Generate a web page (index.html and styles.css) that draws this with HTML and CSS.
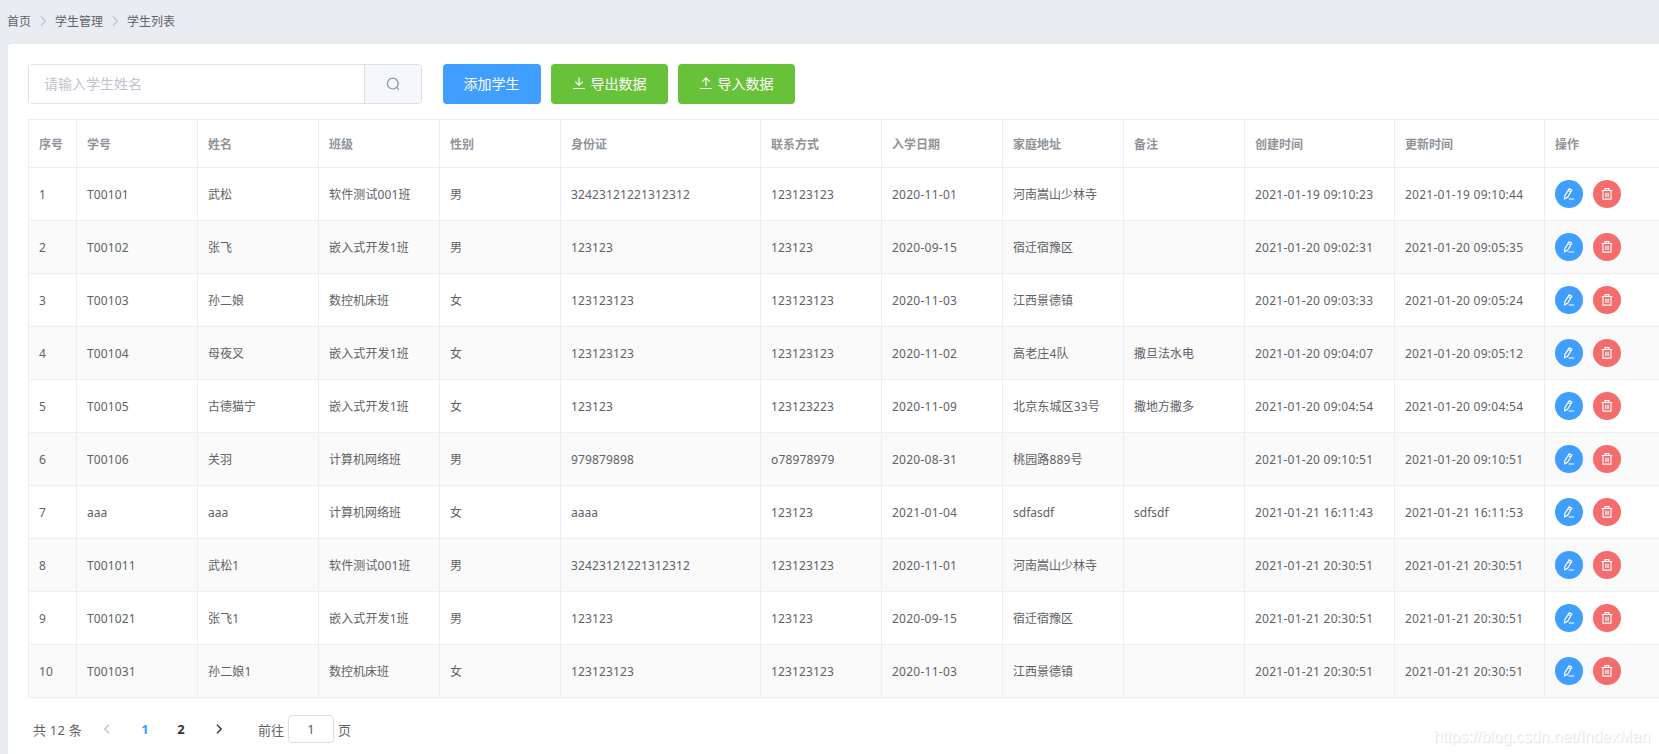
FILE: index.html
```html
<!DOCTYPE html>
<html lang="zh-CN">
<head>
    <meta charset="UTF-8">
    <meta name="viewport" content="width=device-width, initial-scale=1.0">
    <title>学生列表</title>
    <link rel="stylesheet" href="styles.css">
</head>
<body>
    <div class="breadcrumb">
        <span>首页</span>
        <svg class="separator" viewBox="0 0 12 12"><path d="M4 1.5 8.5 6 4 10.5"/></svg>
        <span>学生管理</span>
        <svg class="separator" viewBox="0 0 12 12"><path d="M4 1.5 8.5 6 4 10.5"/></svg>
        <span>学生列表</span>
    </div>

    <div class="card">
        <div class="toolbar">
            <div class="search">
                <input type="text" placeholder="请输入学生姓名">
                <button class="search-btn">
                    <svg class="icon" viewBox="0 0 14 14"><circle cx="6.8" cy="6.6" r="5.4"/><path d="M10.4 10.2 12.8 12.6"/></svg>
                </button>
            </div>
            <button class="btn primary">添加学生</button>
            <button class="btn success">
                <svg class="icon" viewBox="0 0 14 14"><path d="M7 1.5V9M3.2 5.6 7 9.2 10.8 5.6M1.2 12.5H12.8"/></svg>
                <span>导出数据</span>
            </button>
            <button class="btn success">
                <svg class="icon" viewBox="0 0 14 14"><path d="M7 10V2M3.2 5.6 7 1.9 10.8 5.6M1.2 12.5H12.8"/></svg>
                <span>导入数据</span>
            </button>
        </div>

        <table class="table">
            <colgroup>
                <col class="col-index">
                <col class="col"><col class="col"><col class="col"><col class="col">
                <col class="col-card">
                <col class="col"><col class="col"><col class="col"><col class="col">
                <col class="col-time"><col class="col-time"><col class="col-time">
            </colgroup>
            <thead>
                <tr>
                    <th>序号</th>
                    <th>学号</th>
                    <th>姓名</th>
                    <th>班级</th>
                    <th>性别</th>
                    <th>身份证</th>
                    <th>联系方式</th>
                    <th>入学日期</th>
                    <th>家庭地址</th>
                    <th>备注</th>
                    <th>创建时间</th>
                    <th>更新时间</th>
                    <th>操作</th>
                </tr>
            </thead>
            <tbody id="studentList"></tbody>
        </table>

        <div class="pagination">
            <span class="total">共 12 条</span>
            <button class="arrow disabled"><svg viewBox="0 0 12 12"><path d="M8 1.8 3.8 6 8 10.2"/></svg></button>
            <ul class="pager">
                <li class="active">1</li>
                <li>2</li>
            </ul>
            <button class="arrow"><svg viewBox="0 0 12 12"><path d="M4 1.8 8.2 6 4 10.2"/></svg></button>
            <span class="jump">前往<input type="text" value="1">页</span>
        </div>
    </div>

    <div class="watermark">https://blog.csdn.net/IndexMan</div>

    <script>
        const students = [
            ["T00101", "武松", "软件测试001班", "男", "32423121221312312", "123123123", "2020-11-01", "河南嵩山少林寺", "", "2021-01-19 09:10:23", "2021-01-19 09:10:44"],
            ["T00102", "张飞", "嵌入式开发1班", "男", "123123", "123123", "2020-09-15", "宿迁宿豫区", "", "2021-01-20 09:02:31", "2021-01-20 09:05:35"],
            ["T00103", "孙二娘", "数控机床班", "女", "123123123", "123123123", "2020-11-03", "江西景德镇", "", "2021-01-20 09:03:33", "2021-01-20 09:05:24"],
            ["T00104", "母夜叉", "嵌入式开发1班", "女", "123123123", "123123123", "2020-11-02", "高老庄4队", "撒旦法水电", "2021-01-20 09:04:07", "2021-01-20 09:05:12"],
            ["T00105", "古德猫宁", "嵌入式开发1班", "女", "123123", "123123223", "2020-11-09", "北京东城区33号", "撒地方撒多", "2021-01-20 09:04:54", "2021-01-20 09:04:54"],
            ["T00106", "关羽", "计算机网络班", "男", "979879898", "o78978979", "2020-08-31", "桃园路889号", "", "2021-01-20 09:10:51", "2021-01-20 09:10:51"],
            ["aaa", "aaa", "计算机网络班", "女", "aaaa", "123123", "2021-01-04", "sdfasdf", "sdfsdf", "2021-01-21 16:11:43", "2021-01-21 16:11:53"],
            ["T001011", "武松1", "软件测试001班", "男", "32423121221312312", "123123123", "2020-11-01", "河南嵩山少林寺", "", "2021-01-21 20:30:51", "2021-01-21 20:30:51"],
            ["T001021", "张飞1", "嵌入式开发1班", "男", "123123", "123123", "2020-09-15", "宿迁宿豫区", "", "2021-01-21 20:30:51", "2021-01-21 20:30:51"],
            ["T001031", "孙二娘1", "数控机床班", "女", "123123123", "123123123", "2020-11-03", "江西景德镇", "", "2021-01-21 20:30:51", "2021-01-21 20:30:51"]
        ];

        const actions = `
            <div class="actions">
                <button class="circle edit"><svg viewBox="0 0 12 12"><path d="M6.2 .8 8.8 2.2 4.6 9.2 1.6 10.8 1.8 7.6ZM5.2 2.6 7.8 4.1M5.6 11H11.2"/></svg></button>
                <button class="circle delete"><svg viewBox="0 0 12 12"><path d="M.6 2.5H11.4M4 2.5V.7H8V2.5M2 2.7V11.2H10V2.7M4.9 4.8V9M7.1 4.8V9"/></svg></button>
            </div>`;

        // date and time columns
        const dateColumns = [6, 9, 10];

        document.getElementById("studentList").innerHTML = students.map((row, i) => {
            const cells = row.map((text, n) => {
                let type = "";
                if (dateColumns.includes(n)) type = "date";
                else if (/\d/.test(text)) type = "code";
                return `<td class="${type}">${text}</td>`;
            }).join('');
            return `<tr><td class="code">${i + 1}</td>${cells}<td>${actions}</td></tr>`;
        }).join('');
    </script>
</body>
</html>
```
FILE: styles.css
```css
* {
    box-sizing: border-box;
}
body {
    margin: 0;
    height: 754px;
    overflow: hidden;
    background: #e9edf2;
    color: #606266;
    font-family: 'Noto Sans', 'Noto Sans CJK SC', sans-serif;
    font-size: 12px;
}
button, input {
    font-family: inherit;
    margin: 0;
    padding: 0;
    outline: none;
}
button {
    border: none;
    cursor: pointer;
}
svg {
    fill: none;
    stroke: currentColor;
}

/* Breadcrumb */
.breadcrumb {
    display: flex;
    align-items: center;
    height: 44px;
    padding: 0 0 2px 7px;
}
.separator {
    width: 12px;
    height: 12px;
    margin: 0 6px;
    color: #c0c4cc;
    stroke-width: 1.3;
}

/* Card */
.card {
    height: 720px;
    margin-left: 8px;
    padding: 20px 0 0 20px;
    background: white;
    border-radius: 4px 0 0 0;
    overflow: hidden;
}
.toolbar {
    display: flex;
    margin-bottom: 15px;
}
.search {
    display: flex;
    width: 394px;
    height: 40px;
    margin-right: 21px;
    border: 1px solid #dcdfe6;
    border-radius: 4px;
    overflow: hidden;
}
.search input {
    flex: 1;
    min-width: 0;
    padding: 0 15px 2px;
    border: none;
    font-size: 14px;
    color: #606266;
}
.search input::placeholder {
    color: #c0c4cc;
}
.search-btn {
    display: flex;
    align-items: center;
    justify-content: center;
    width: 57px;
    border-left: 1px solid #dcdfe6;
    background: #f5f7fa;
    color: #909399;
}
.icon {
    width: 14px;
    height: 14px;
    stroke-width: 1.2;
}
.btn {
    display: flex;
    align-items: center;
    justify-content: center;
    gap: 5px;
    width: 117px;
    height: 40px;
    margin-right: 10px;
    padding: 0 1px 2px 0;
    border-radius: 4px;
    color: white;
    font-size: 14px;
}
.primary {
    width: 98px;
    background: #409eff;
}
.success {
    background: #67c23a;
}

/* Table */
.table {
    width: 1666px;
    table-layout: fixed;
    border-collapse: separate;
    border-spacing: 0;
    border-top: 1px solid #ebeef5;
    border-left: 1px solid #ebeef5;
}
.col {
    width: 121px;
}
.col-index {
    width: 48px;
}
.col-card {
    width: 200px;
}
.col-time {
    width: 150px;
}
.table th, .table td {
    padding: 0 10px;
    border-right: 1px solid #ebeef5;
    border-bottom: 1px solid #ebeef5;
    text-align: left;
    white-space: nowrap;
}
.table th {
    height: 48px;
    color: #909399;
    font-weight: bold;
}
.table td {
    height: 53px;
}
.table tbody tr:nth-child(even) td {
    background: #fafafa;
}
.table .code {
    letter-spacing: 0.14px;
}
.table .date {
    letter-spacing: 0.26px;
}
.actions {
    display: flex;
    gap: 10px;
}
.circle {
    display: flex;
    align-items: center;
    justify-content: center;
    width: 28px;
    height: 28px;
    border-radius: 50%;
    color: white;
}
.circle svg {
    width: 12px;
    height: 12px;
    stroke-width: 1.2;
}
.edit {
    background: #409eff;
}
.delete {
    background: #f56c6c;
}

/* Pagination */
.pagination {
    display: flex;
    align-items: center;
    height: 28px;
    margin-top: 17px;
    padding-left: 5px;
    font-size: 13px;
}
.total {
    width: 56px;
    letter-spacing: 0.2px;
    white-space: nowrap;
}
.arrow {
    display: flex;
    align-items: center;
    justify-content: center;
    width: 36px;
    height: 28px;
    background: none;
    color: #303133;
}
.arrow svg {
    width: 12px;
    height: 12px;
    stroke-width: 1.4;
}
.arrow.disabled {
    color: #c0c4cc;
}
.pager {
    display: flex;
    margin: 0 2px;
    padding: 0;
    list-style: none;
    color: #303133;
    font-weight: bold;
}
.pager li {
    width: 36px;
    text-align: center;
}
.pager .active {
    color: #409eff;
}
.jump {
    display: flex;
    align-items: center;
    margin-left: 21px;
}
.jump input {
    width: 46px;
    height: 28px;
    margin: 0 4px;
    border: 1px solid #dcdfe6;
    border-radius: 4px;
    color: #606266;
    font-size: 13px;
    text-align: center;
}

.watermark {
    position: absolute;
    right: 9px;
    bottom: 8px;
    color: #ffffff;
    font-family: 'Liberation Sans', sans-serif;
    font-size: 15.9px;
    text-shadow: 1px 1px 1px #dcdcdc;
}
```
